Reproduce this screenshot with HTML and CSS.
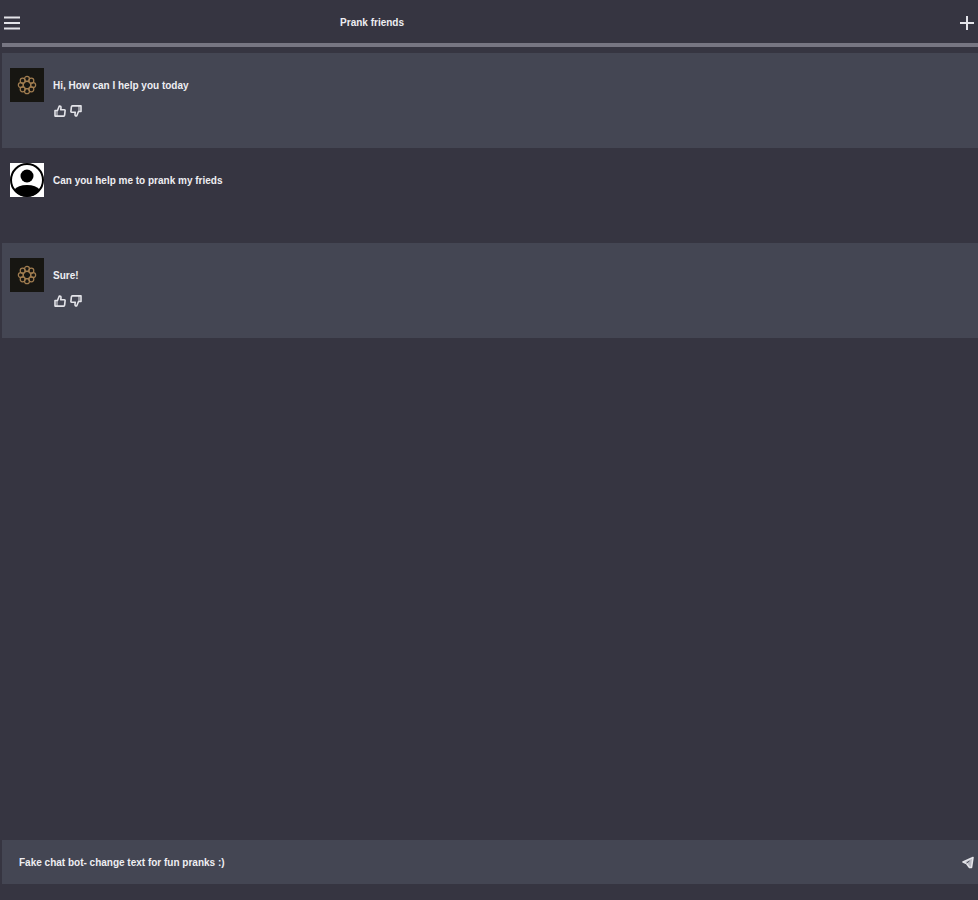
FILE: index.html
```html
<!DOCTYPE html>
<html lang="en">
<head>
    <title>Prank friends</title>
    <meta charset="UTF-8">
    <meta name="viewport" content="width=device-width, initial-scale=1.0">
    <link rel="stylesheet" href="styles.css">
</head>
<body>
    <!-- Shared icons -->
    <svg class="sprite" aria-hidden="true">
        <symbol id="bot" viewBox="0 0 33 33">
            <rect width="33" height="33" fill="#171612"/>
            <g fill="none" stroke="#a17d50" stroke-width="1.2">
                <circle cx="16.5" cy="10.5" r="2.4"/>
                <circle cx="20.7" cy="12.3" r="2.4"/>
                <circle cx="22.5" cy="16.5" r="2.4"/>
                <circle cx="20.7" cy="20.7" r="2.4"/>
                <circle cx="16.5" cy="22.5" r="2.4"/>
                <circle cx="12.3" cy="20.7" r="2.4"/>
                <circle cx="10.5" cy="16.5" r="2.4"/>
                <circle cx="12.3" cy="12.3" r="2.4"/>
                <circle cx="16.5" cy="16.5" r="3.6"/>
            </g>
        </symbol>
        <symbol id="like" viewBox="0 0 12 12">
            <path d="M1 5.500h2.500L5.300 1q1.900-.2 1.700 1.800L6.700 4.800H10.400q.8 0 .7.800L10.600 10.200q-.1.900-1 .9H1z" fill="none" stroke="currentColor" stroke-width="1.600" stroke-linejoin="round"/>
            <path d="M3 5.500v5.500" stroke="currentColor"/>
        </symbol>
    </svg>

    <header class="header">
        <button class="icon-button" type="button" aria-label="Menu">
            <svg width="16" height="14" viewBox="0 0 16 14"><path d="M0 1.500h16M0 7h16M0 12.500h16" stroke="currentColor" stroke-width="2"/></svg>
        </button>
        <h1>Prank friends</h1>
        <button class="icon-button" type="button" aria-label="New chat">
            <svg width="14" height="14" viewBox="0 0 14 14"><path d="M7 0v14M0 7h14" stroke="currentColor" stroke-width="2"/></svg>
        </button>
    </header>

    <main class="chat">
        <article class="message bot">
            <svg class="avatar" role="img" aria-label="Bot"><use href="#bot"/></svg>
            <div class="content">
                <p>Hi, How can I help you today</p>
                <div class="feedback">
                    <button class="icon-button" type="button" aria-label="Like"><svg width="12" height="12"><use href="#like"/></svg></button>
                    <button class="icon-button dislike" type="button" aria-label="Dislike"><svg width="12" height="12"><use href="#like"/></svg></button>
                </div>
            </div>
        </article>

        <article class="message">
            <svg class="avatar" viewBox="0 0 34 34" role="img" aria-label="You">
                <rect width="34" height="34" fill="#fff"/>
                <circle cx="17" cy="17" r="16" fill="#fff" stroke="#000" stroke-width="2"/>
                <circle cx="17" cy="13" r="6.500" fill="#000"/>
                <path d="M4 27q4-5 13-5t13 5a16 16 0 0 1-26 0z" fill="#000"/>
            </svg>
            <div class="content">
                <p>Can you help me to prank my frieds</p>
            </div>
        </article>

        <article class="message bot">
            <svg class="avatar" role="img" aria-label="Bot"><use href="#bot"/></svg>
            <div class="content">
                <p>Sure!</p>
                <div class="feedback">
                    <button class="icon-button" type="button" aria-label="Like"><svg width="12" height="12"><use href="#like"/></svg></button>
                    <button class="icon-button dislike" type="button" aria-label="Dislike"><svg width="12" height="12"><use href="#like"/></svg></button>
                </div>
            </div>
        </article>
    </main>

    <form class="composer">
        <input type="text" aria-label="Message" value="Fake chat bot- change text for fun pranks :)">
        <button class="icon-button" type="submit" aria-label="Send">
            <svg width="12" height="13" viewBox="0 0 12 13"><path d="M11 1.500L1 6l3.500 1.500L7.500 11.500H9.500z" fill="#b9bac3" stroke="currentColor" stroke-width="1.600" stroke-linejoin="round"/><path d="M4.500 7l3-2" stroke="#444653"/></svg>
        </button>
    </form>
</body>
</html>
```

FILE: styles.css
```css
* {
    box-sizing: border-box;
}
body {
    display: flex;
    flex-direction: column;
    min-height: 100vh;
    margin: 0;
    padding: 0 0 16px 2px;
    background-color: #363541;
    color: #eeeef2;
    font-family: "Liberation Sans", Arial, sans-serif;
    font-size: 10px;
    font-weight: bold;
    line-height: 16px;
}
.sprite {
    position: absolute;
    width: 0;
    height: 0;
}
h1, p {
    margin: 0;
    font-size: inherit;
}
.icon-button {
    display: flex;
    padding: 0;
    border: none;
    background: none;
    color: #e4e4e9;
    cursor: pointer;
}
.header {
    display: flex;
    align-items: center;
    height: 47px;
    padding: 2px 4px 0 2px;
    border-bottom: 4px solid #777682;
}
.header h1 {
    flex: 1;
    padding-left: 33%;
}
.chat {
    flex: 1;
    padding-top: 6px;
}
.message {
    display: flex;
    gap: 9px;
    min-height: 95px;
    padding: 15px 8px;
}
.message.bot {
    background-color: #444653;
}
.avatar {
    flex: none;
    width: 34px;
    height: 34px;
}
.content {
    padding-top: 10px;
}
.feedback {
    display: flex;
    gap: 4px;
    margin: 11px 0 0 1px;
}
.dislike {
    transform: rotate(180deg);
}
.composer {
    display: flex;
    align-items: center;
    height: 44px;
    padding: 1px 4px 0 17px;
    background-color: #444653;
}
.composer input {
    flex: 1;
    min-width: 0;
    padding: 0;
    border: none;
    outline: none;
    background: none;
    color: inherit;
    font: inherit;
}
```
